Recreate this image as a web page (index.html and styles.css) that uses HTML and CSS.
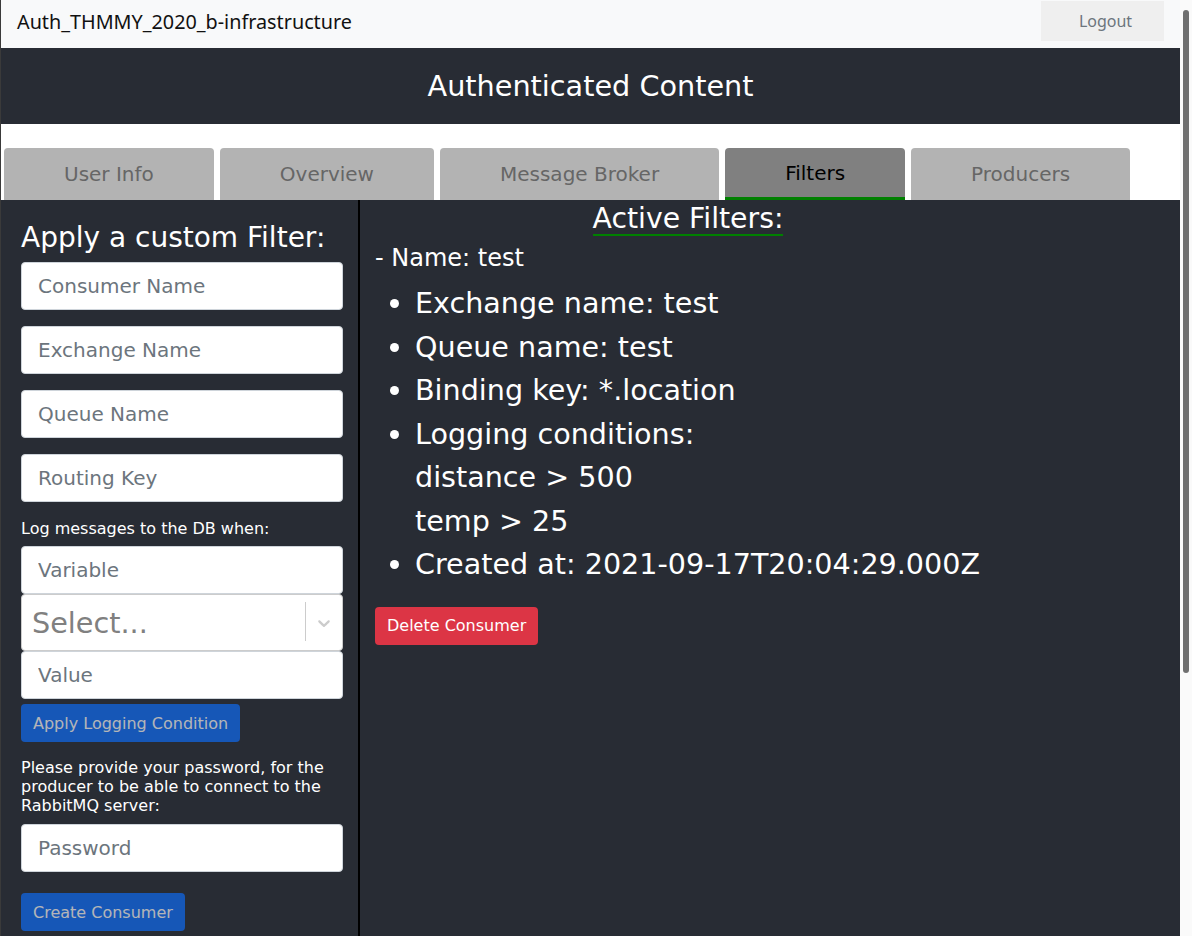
FILE: index.html
```html
<!DOCTYPE html>
<html lang="en">
<head>
<meta charset="utf-8">
<title>Auth_THMMY_2020_b-infrastructure</title>
<link rel="stylesheet" href="styles.css">
</head>
<body>
<div class="app">
  <nav class="topbar">
    <span class="brand">Auth_THMMY_2020_b-infrastructure</span>
    <button class="logout" type="button">Logout</button>
  </nav>
  <header class="hero">
    <h1>Authenticated Content</h1>
  </header>
  <div class="tabs">
    <button class="tab" type="button">User Info</button>
    <button class="tab" type="button">Overview</button>
    <button class="tab" type="button">Message Broker</button>
    <button class="tab tab-active" type="button">Filters</button>
    <button class="tab" type="button">Producers</button>
  </div>
  <main class="content">
    <aside class="filter-form">
      <h2 class="form-title">Apply a custom Filter:</h2>
      <div class="field-stack">
        <input class="field" type="text" placeholder="Consumer Name">
        <input class="field" type="text" placeholder="Exchange Name">
        <input class="field" type="text" placeholder="Queue Name">
        <input class="field" type="text" placeholder="Routing Key">
      </div>
      <p class="hint hint-log">Log messages to the DB when:</p>
      <div class="condition">
        <input class="field" type="text" placeholder="Variable">
        <div class="select">
          <span class="select-placeholder">Select...</span>
          <span class="select-indicators">
            <span class="select-sep"></span>
            <svg class="select-chevron" width="20" height="20" viewBox="0 0 20 20" aria-hidden="true"><path d="M4.516 7.548c0.436-0.446 1.043-0.481 1.576 0l3.908 3.747 3.908-3.747c0.533-0.481 1.141-0.446 1.574 0 0.436 0.445 0.408 1.197 0 1.615-0.406 0.418-4.695 4.502-4.695 4.502-0.217 0.223-0.502 0.335-0.787 0.335s-0.57-0.112-0.789-0.335c0 0-4.287-4.084-4.695-4.502s-0.436-1.170 0-1.615z" fill="#cccccc"/></svg>
          </span>
        </div>
        <input class="field" type="text" placeholder="Value">
      </div>
      <button class="btn btn-primary btn-disabled btn-apply" type="button">Apply Logging Condition</button>
      <p class="hint hint-pass">Please provide your password, for the producer to be able to connect to the RabbitMQ server:</p>
      <input class="field" type="password" placeholder="Password">
      <button class="btn btn-primary btn-disabled btn-create" type="button">Create Consumer</button>
    </aside>
    <section class="active-filters">
      <div class="filters-heading-wrap">
        <h2 class="filters-heading">Active Filters:</h2>
      </div>
      <p class="consumer-name">- Name: test</p>
      <ul class="filter-list">
        <li>Exchange name: test</li>
        <li>Queue name: test</li>
        <li>Binding key: *.location</li>
        <li>Logging conditions:<br>distance &gt; 500<br>temp &gt; 25</li>
        <li>Created at: 2021-09-17T20:04:29.000Z</li>
      </ul>
      <button class="btn btn-danger" type="button">Delete Consumer</button>
    </section>
  </main>
</div>
<div class="scroll-rail" aria-hidden="true"><div class="scroll-thumb"></div></div>
</body>
</html>
```
FILE: styles.css
```css
html {
  background: #fafafa;
}
body {
  margin: 0;
  font-family: "DejaVu Sans", Verdana, sans-serif;
  background: #fafafa;
  display: flex;
  align-items: flex-start;
}
.app {
  width: 1180px;
  flex: none;
  box-sizing: border-box;
  border-left: 1px solid #3a3a3a;
  min-height: 1320px;
  display: flex;
  flex-direction: column;
  background: #282c34;
}
.scroll-rail {
  width: 12px;
  height: 936px;
  flex: none;
  box-sizing: border-box;
  padding: 10px 3px 0 3px;
  background: #fafafa;
}
.scroll-thumb {
  height: 663px;
  border-radius: 3px;
  background: #6f6f6f;
}
.topbar {
  background: #f8f9fa;
  height: 48px;
  box-sizing: border-box;
  padding: 1px 16px 7px 16px;
  display: flex;
  align-items: center;
  justify-content: space-between;
}
.brand {
  font-family: "Noto Sans", "Open Sans", sans-serif;
  font-size: 19.8px;
  color: #111;
}
.logout {
  width: 123px;
  height: 40px;
  border: none;
  padding: 0 0 0 6px;
  background: #efefef;
  color: #6c757d;
  font-family: "Noto Sans", "Open Sans", sans-serif;
  font-size: 16px;
}
.hero {
  background: #282c34;
  height: 76px;
  display: flex;
  align-items: center;
  justify-content: center;
}
.hero h1 {
  margin: 0;
  font-weight: normal;
  font-size: 28.7px;
  color: #ffffff;
}
.tabs {
  background: #ffffff;
  padding: 24px 0 0 3px;
  display: flex;
  gap: 6px;
}
.tab {
  height: 52px;
  padding: 0 60px;
  border: none;
  border-radius: 4px 4px 0 0;
  background: #b3b3b3;
  color: #666666;
  font-family: "DejaVu Sans", Verdana, sans-serif;
  font-size: 20px;
  white-space: nowrap;
}
.tab-active {
  background: #808080;
  color: #000000;
  border-bottom: 3px solid #008000;
}
.content {
  flex: 1;
  display: flex;
  background: #282c34;
}
.filter-form {
  width: 359px;
  flex: none;
  box-sizing: border-box;
  border-right: 2px solid #000000;
  padding: 22px 15px 0 20px;
  display: flex;
  flex-direction: column;
  align-items: flex-start;
  color: #ffffff;
}
.form-title {
  margin: 0 0 8px 0;
  font-weight: normal;
  font-size: 28px;
  line-height: 32px;
  white-space: nowrap;
}
.field-stack {
  display: flex;
  flex-direction: column;
  gap: 16px;
}
.field {
  width: 322px;
  height: 48px;
  box-sizing: border-box;
  border: 1px solid #ced4da;
  border-radius: 4px;
  background: #ffffff;
  padding: 0 16px;
  font-family: "DejaVu Sans", Verdana, sans-serif;
  font-size: 20px;
  color: #212529;
}
.field::placeholder {
  color: #6c757d;
}
.hint {
  margin: 0;
  font-size: 16px;
  line-height: 19px;
  color: #ffffff;
}
.hint-log {
  margin-top: 17px;
  margin-bottom: 8px;
}
.condition {
  display: flex;
  flex-direction: column;
}
.select {
  width: 322px;
  height: 57px;
  box-sizing: border-box;
  border: 1px solid #cccccc;
  border-radius: 4px;
  background: #ffffff;
  display: flex;
  align-items: center;
  justify-content: space-between;
  padding-left: 10px;
}
.select-placeholder {
  font-size: 28.7px;
  color: #808080;
}
.select-indicators {
  display: flex;
  align-items: center;
  align-self: stretch;
}
.select-sep {
  width: 1px;
  align-self: stretch;
  margin: 7px 0 9px 0;
  background: #cccccc;
}
.select-chevron {
  margin: 0 8px 0 8px;
  width: 20px;
  height: 20px;
}
.btn {
  height: 38px;
  padding: 0 12px;
  border: none;
  border-radius: 4px;
  font-family: "DejaVu Sans", Verdana, sans-serif;
  font-size: 16px;
  color: #ffffff;
  white-space: nowrap;
}
.btn-primary {
  background: #0d6efd;
}
.btn-disabled {
  opacity: 0.65;
}
.btn-apply {
  margin-top: 5px;
}
.hint-pass {
  margin-top: 16px;
  margin-bottom: 9px;
}
.btn-create {
  margin-top: 21px;
}
.btn-danger {
  background: #dc3545;
}
.active-filters {
  flex: 1;
  padding: 0 16px 0 15px;
  color: #ffffff;
}
.filters-heading-wrap {
  width: 626px;
  text-align: center;
}
.filters-heading {
  display: inline-block;
  margin: 0;
  padding-top: 3px;
  font-weight: normal;
  font-size: 28.3px;
  line-height: 31px;
  border-bottom: 2px solid #008000;
}
.consumer-name {
  margin: 7px 0 0 0;
  font-size: 24px;
  line-height: 30px;
}
.filter-list {
  margin: 9px 0 20px 0;
  padding-left: 40px;
  font-size: 28.6px;
  line-height: 43.5px;
}
```
